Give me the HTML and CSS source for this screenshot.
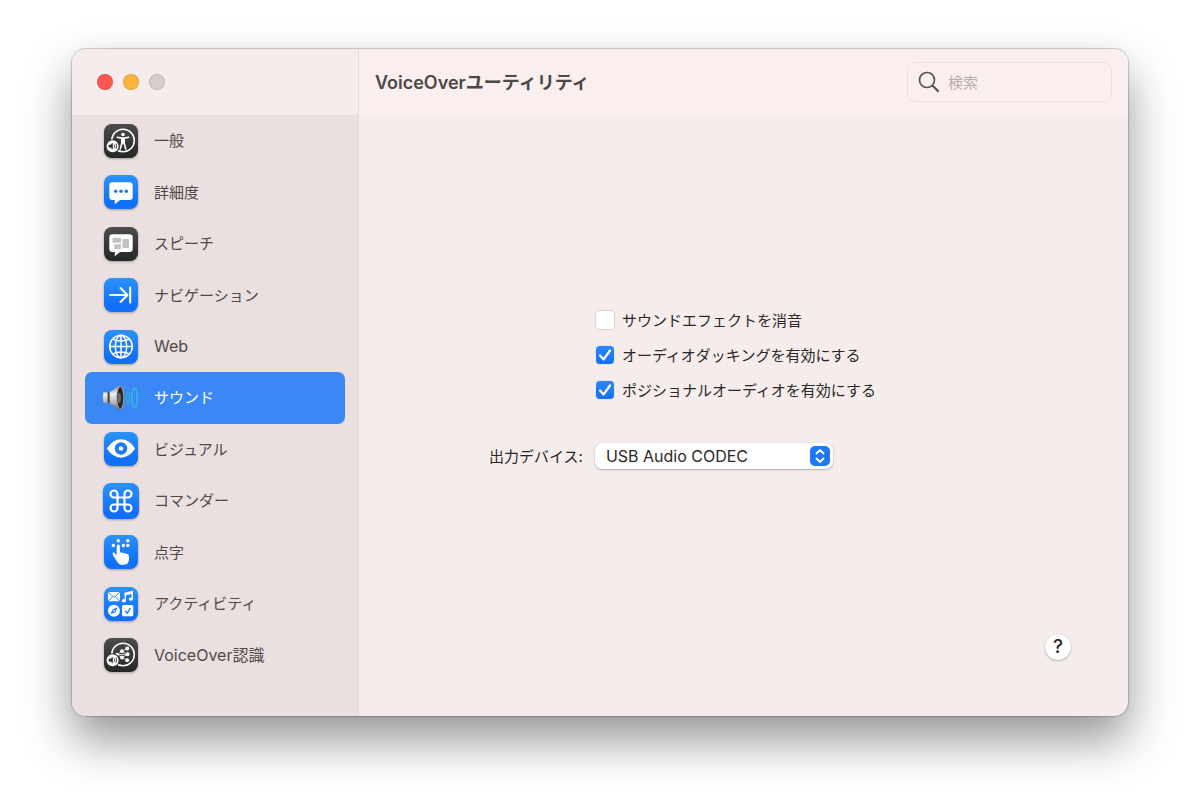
FILE: index.html
```html
<!DOCTYPE html>
<html lang="ja">

<head>
    <meta charset="UTF-8">
    <meta name="viewport" content="width=device-width, initial-scale=1.0">
    <title>VoiceOverユーティリティ</title>
    <link rel="stylesheet" href="styles.css">
</head>

<body>
    <!-- Shared gradients for the sidebar icons -->
    <svg class="defs" width="0" height="0" aria-hidden="true">
        <defs>
            <linearGradient id="blue" x1="0" y1="0" x2="0" y2="1">
                <stop offset="0" stop-color="#2b92fb" />
                <stop offset="0.8" stop-color="#1070fa" />
            </linearGradient>
            <linearGradient id="dark" x1="0" y1="0" x2="0" y2="1">
                <stop offset="0" stop-color="#4b4d4d" />
                <stop offset="1" stop-color="#252727" />
            </linearGradient>
            <linearGradient id="metal" x1="0" y1="0" x2="0" y2="1">
                <stop offset="0" stop-color="#8d8d8d" />
                <stop offset="0.35" stop-color="#f0f0f0" />
                <stop offset="0.7" stop-color="#b5b5b5" />
                <stop offset="1" stop-color="#5e5e5e" />
            </linearGradient>
        </defs>
    </svg>

    <div class="window">
        <aside class="sidebar">
            <div class="window-controls">
                <button class="control close" type="button" aria-label="閉じる"></button>
                <button class="control minimize" type="button" aria-label="しまう"></button>
                <button class="control zoom" type="button" aria-label="拡大" disabled></button>
            </div>
            <nav class="categories">
                <a class="category" href="#general">
                    <svg class="category-icon" viewBox="0 0 38 38">
                        <rect x="2" y="2" width="34" height="34" rx="8" fill="url(#dark)" />
                        <circle cx="21" cy="18.5" r="11.3" fill="none" stroke="#fff" stroke-width="1.5" />
                        <circle cx="21" cy="12.5" r="1.8" fill="#fff" />
                        <path d="M15.3 15.2l4.2.9h3l4.2-.9M21 16.5v5M19.8 16.5v5l-1.6 5.5M22.2 16.5v5l1.6 5.5" fill="none" stroke="#fff" stroke-width="1.6" stroke-linecap="round" />
                        <circle cx="10.6" cy="24.2" r="7" fill="#323434" />
                        <circle cx="10.6" cy="24.2" r="6" fill="#fff" />
                        <path d="M6.6 22.8h1.8l2.4-2v6.8l-2.4-2H6.6z" fill="#333" />
                        <path d="M12.2 22.6q1 1.6 0 3.2M13.8 21.5q1.8 2.7 0 5.4" fill="none" stroke="#333" stroke-width="0.9" />
                    </svg>
                    <span class="category-name">一般</span>
                </a>
                <a class="category" href="#verbosity">
                    <svg class="category-icon" viewBox="0 0 38 38">
                        <rect x="2" y="2" width="34" height="34" rx="8" fill="url(#blue)" />
                        <path d="M10.5 9.3h17a3.2 3.2 0 0 1 3.2 3.2v11.3a3.2 3.2 0 0 1-3.2 3.2H18l-5.2 4.3V27h-2.3a3.2 3.2 0 0 1-3.2-3.2V12.5a3.2 3.2 0 0 1 3.2-3.2z" fill="#fff" />
                        <g fill="#187bfa">
                            <circle cx="13.7" cy="18.2" r="1.7" />
                            <circle cx="19" cy="18.2" r="1.7" />
                            <circle cx="24.3" cy="18.2" r="1.7" />
                        </g>
                    </svg>
                    <span class="category-name">詳細度</span>
                </a>
                <a class="category" href="#speech">
                    <svg class="category-icon" viewBox="0 0 38 38">
                        <rect x="2" y="2" width="34" height="34" rx="8" fill="url(#dark)" />
                        <path d="M10.5 9.3h17a3.2 3.2 0 0 1 3.2 3.2v11.3a3.2 3.2 0 0 1-3.2 3.2H18l-5.2 4.3V27h-2.3a3.2 3.2 0 0 1-3.2-3.2V12.5a3.2 3.2 0 0 1 3.2-3.2z" fill="#fff" />
                        <g fill="#c2c2c2">
                            <rect x="10.5" y="12.8" width="8.5" height="5" rx="0.8" />
                            <rect x="12.2" y="19.3" width="6.8" height="4.7" rx="0.8" />
                            <rect x="20.5" y="14" width="6.5" height="9" rx="0.8" />
                        </g>
                    </svg>
                    <span class="category-name">スピーチ</span>
                </a>
                <a class="category" href="#navigation">
                    <svg class="category-icon" viewBox="0 0 38 38">
                        <rect x="2" y="2" width="34" height="34" rx="8" fill="url(#blue)" />
                        <path d="M8 19h17.5M18.5 12l7 7-7 7M28.2 11.5v15" fill="none" stroke="#fff" stroke-width="2" stroke-linecap="round" stroke-linejoin="round" />
                    </svg>
                    <span class="category-name">ナビゲーション</span>
                </a>
                <a class="category" href="#web">
                    <svg class="category-icon" viewBox="0 0 38 38">
                        <rect x="2" y="2" width="34" height="34" rx="8" fill="url(#blue)" />
                        <g fill="none" stroke="#fff" stroke-width="1.5">
                            <circle cx="19" cy="18.5" r="11.3" />
                            <ellipse cx="19" cy="18.5" rx="5.7" ry="11.3" />
                            <path d="M7.7 18.5h22.6M19 7.2v22.6M10.5 11q8.5 4 17 0M10.5 26q8.5-4 17 0" />
                        </g>
                    </svg>
                    <span class="category-name latin">Web</span>
                </a>
                <a class="category selected" href="#sound" aria-current="page">
                    <svg class="category-icon no-shadow" viewBox="0 0 38 38">
                        <path d="M1.3 13.5q-.8 5 0 9.500 2.200 1.300 5.200.8 5 2.200 9.500 6.700 3.500 1.500 5-2 2-9.800 0-19.500-1.500-3.500-5-2-4.500 4.700-9.500 6.800-3-.8-5.200-.3z" fill="url(#metal)" />
                        <path d="M5.500 13.500l2.200-.4v11.300l-2.200-.6z" fill="#4a4a4a" />
                        <ellipse cx="18.300" cy="18.700" rx="3.500" ry="11.200" fill="#292929" stroke="#aaa" stroke-width="0.8" />
                        <ellipse cx="17.300" cy="19" rx="1.600" ry="5" fill="#6c6c6c" />
                        <ellipse cx="26" cy="18.7" rx="1.6" ry="5.6" fill="none" stroke="#35a8e0" stroke-width="1.5" />
                        <ellipse cx="32.5" cy="18.7" rx="2.7" ry="9.7" fill="none" stroke="#35b2e2" stroke-width="1.7" />
                    </svg>
                    <span class="category-name">サウンド</span>
                </a>
                <a class="category" href="#visual">
                    <svg class="category-icon" viewBox="0 0 38 38">
                        <rect x="2" y="2" width="34" height="34" rx="8" fill="url(#blue)" />
                        <path d="M4.8 18.5Q11 9.3 19 9.3t14.2 9.2Q27 27.7 19 27.7T4.8 18.5z" fill="#fff" />
                        <circle cx="19" cy="18.5" r="6.2" fill="#187afa" />
                        <circle cx="19" cy="18.5" r="2.3" fill="#fff" />
                    </svg>
                    <span class="category-name">ビジュアル</span>
                </a>
                <a class="category" href="#commanders">
                    <svg class="category-icon" viewBox="0 0 38 38">
                        <rect x="1" y="1" width="36" height="36" rx="8" fill="url(#blue)" />
                        <path d="M15.5 12a3.5 3.5 0 1 0-3.5 3.5h14a3.5 3.5 0 1 0-3.5-3.5v14a3.5 3.5 0 1 0 3.5-3.5H12a3.5 3.5 0 1 0 3.5 3.5z" fill="none" stroke="#fff" stroke-width="2.2" />
                    </svg>
                    <span class="category-name">コマンダー</span>
                </a>
                <a class="category" href="#braille">
                    <svg class="category-icon" viewBox="0 0 38 38">
                        <rect x="2" y="2" width="34" height="34" rx="8" fill="url(#blue)" />
                        <g fill="#fff">
                            <circle cx="16.3" cy="7.8" r="1.7" />
                            <circle cx="25.8" cy="7.8" r="1.7" />
                            <circle cx="11.3" cy="12.5" r="1.7" />
                            <circle cx="21.3" cy="12.5" r="1.7" />
                            <circle cx="25.8" cy="12.5" r="1.7" />
                            <path d="M14.7 13.2a1.6 1.6 0 0 1 3.2 0v6.3q1.2-.8 2.4.4 1.4-.7 2.3.5 1.5-.5 2.2.7 2.2 0 2.2 2.4v2.5q0 5.8-6.2 6-4 0-5.8-3.5l-3.6-5.6q-1.6-2.8-.2-3.3 1.2-.3 2.3 1.4l1.2 1.2z" />
                        </g>
                    </svg>
                    <span class="category-name">点字</span>
                </a>
                <a class="category" href="#activities">
                    <svg class="category-icon" viewBox="0 0 38 38">
                        <rect x="2" y="2" width="34" height="34" rx="8" fill="url(#blue)" />
                        <rect x="6" y="7" width="12" height="9.3" rx="1.5" fill="#fff" />
                        <path d="M6.5 7.5l5.5 4.8 5.5-4.8M6.5 16l4-4.5M17.5 16l-4-4.500" fill="none" stroke="#1c80fa" stroke-width="0.9" />
                        <path d="M23.3 15.5V8.3l7-1.6v7.3" fill="none" stroke="#fff" stroke-width="1.4" />
                        <path d="M22.7 8.3l8.2-1.9v2.3l-8.2 1.9z" fill="#fff" />
                        <ellipse cx="21.9" cy="15.7" rx="2.1" ry="1.6" fill="#fff" />
                        <ellipse cx="28.9" cy="14.1" rx="2.1" ry="1.6" fill="#fff" />
                        <circle cx="12" cy="25.7" r="6" fill="#fff" />
                        <path d="M15.5 22.2l-2 4.8-5 2.2 2-4.8z" fill="#1674fa" />
                        <circle cx="12" cy="25.7" r="0.9" fill="#fff" />
                        <rect x="20" y="20" width="11.3" height="11.3" rx="1.5" fill="#fff" />
                        <path d="M23.2 26l2 2.2 3.3-5.2" fill="none" stroke="#1674fa" stroke-width="1.3" />
                    </svg>
                    <span class="category-name">アクティビティ</span>
                </a>
                <a class="category" href="#recognition">
                    <svg class="category-icon" viewBox="0 0 38 38">
                        <rect x="2" y="2" width="34" height="34" rx="8" fill="url(#dark)" />
                        <circle cx="21" cy="18.5" r="11.3" fill="none" stroke="#fff" stroke-width="1.5" />
                        <path d="M15 18.5l5-3.3 5-2.5M15 18.5l5 3 5 2.5M20 15.2l5.3 3.3-5.3 3M15 18.5h10" fill="none" stroke="#fff" stroke-width="0.7" />
                        <g fill="#fff">
                            <circle cx="15" cy="18.5" r="1.7" />
                            <circle cx="20" cy="15.2" r="1.9" />
                            <circle cx="20" cy="21.5" r="1.9" />
                            <circle cx="25.2" cy="12.5" r="2" />
                            <circle cx="25.5" cy="18.3" r="2" />
                            <circle cx="25.2" cy="24.2" r="2" />
                        </g>
                        <circle cx="10.6" cy="24.2" r="7" fill="#323434" />
                        <circle cx="10.6" cy="24.2" r="6" fill="#fff" />
                        <path d="M6.6 22.8h1.8l2.4-2v6.8l-2.4-2H6.6z" fill="#333" />
                        <path d="M12.2 22.6q1 1.6 0 3.2M13.8 21.5q1.8 2.7 0 5.4" fill="none" stroke="#333" stroke-width="0.9" />
                    </svg>
                    <span class="category-name latin">VoiceOver認識</span>
                </a>
            </nav>
        </aside>

        <main class="main">
            <header class="toolbar">
                <h1 class="title">VoiceOverユーティリティ</h1>
                <label class="search">
                    <svg class="search-icon" viewBox="0 0 22 22" aria-hidden="true">
                        <circle cx="9" cy="9" r="7.5" fill="none" stroke="#5a5352" stroke-width="1.7" />
                        <path d="M14.5 14.5l5.5 5.5" stroke="#5a5352" stroke-width="2.2" stroke-linecap="round" />
                    </svg>
                    <input class="search-input" type="search" placeholder="検索" aria-label="検索">
                </label>
            </header>

            <form class="settings">
                <div class="options">
                    <label class="option"><input class="checkbox" type="checkbox">サウンドエフェクトを消音</label>
                    <label class="option"><input class="checkbox" type="checkbox" checked>オーディオダッキングを有効にする</label>
                    <label class="option"><input class="checkbox" type="checkbox" checked>ポジショナルオーディオを有効にする</label>
                </div>
                <label class="device-label" for="device">出力デバイス:</label>
                <select class="device" id="device">
                    <option>USB Audio CODEC</option>
                </select>
            </form>

            <footer class="footer">
                <button class="help" type="button" aria-label="ヘルプ">?</button>
            </footer>
        </main>
    </div>
</body>

</html>
```
FILE: styles.css
```css
* {
    box-sizing: border-box;
    margin: 0;
    padding: 0;
}

body {
    display: flex;
    min-height: 100vh;
    padding: 49px 72px 95px;
    background-color: #fff;
    font-family: Inter, "Noto Sans CJK JP", sans-serif;
    font-size: 15px;
    color: #2b2727;
}

input,
select,
button {
    font: inherit;
    color: inherit;
}

.defs {
    position: absolute;
}

.window {
    flex: 1;
    display: flex;
    border-radius: 14px;
    overflow: hidden;
    background-color: #f5edeb;
    box-shadow: 0 0 1px 1px rgba(0, 0, 0, 0.2), 0 24px 48px rgba(0, 0, 0, 0.42);
}

/* Sidebar */

.sidebar {
    flex: 0 0 287px;
    display: flex;
    flex-direction: column;
    background-color: #e9e0df;
    border-right: 1px solid #e3dad9;
}

.window-controls {
    display: flex;
    align-items: center;
    gap: 10px;
    height: 66px;
    padding-left: 25px;
    background-color: #f6eceb;
}

.control {
    width: 16px;
    height: 16px;
    border: 1px solid rgba(0, 0, 0, 0.1);
    border-radius: 50%;
}

.close {
    background-color: #fe5850;
}

.minimize {
    background-color: #fdb43c;
}

.zoom {
    background-color: #d6cdcc;
}

.categories {
    flex: 1;
    display: flex;
    flex-direction: column;
    padding: 0 13px 35px;
}

.category {
    flex: 1;
    display: flex;
    align-items: center;
    gap: 14px;
    padding-left: 17px;
    border-radius: 7px;
    color: #4f4948;
    text-decoration: none;
}

.selected {
    background-color: #3988f5;
    color: #fff;
}

.category-icon {
    width: 38px;
    height: 38px;
    filter: drop-shadow(0 1px 1px rgba(0, 0, 0, 0.3));
}

.no-shadow {
    filter: none;
}

.category-name {
    padding-bottom: 2px;
}

.latin {
    font-size: 16px;
}

/* Main pane */

.main {
    flex: 1;
    display: flex;
    flex-direction: column;
}

.toolbar {
    display: flex;
    align-items: center;
    justify-content: space-between;
    height: 66px;
    padding: 0 16px;
    background-color: #faefee;
}

.title {
    padding-bottom: 2px;
    font-size: 18px;
    font-weight: 600;
    color: #4d4746;
}

.search {
    display: flex;
    align-items: center;
    gap: 8px;
    width: 205px;
    height: 40px;
    padding: 0 10px;
    border: 1px solid #ece1e0;
    border-radius: 8px;
}

.search-icon {
    flex: none;
    width: 22px;
    height: 22px;
}

.search-input {
    width: 100%;
    border: none;
    outline: none;
    background: none;
}

.search-input::placeholder {
    color: #b8adac;
}

.settings {
    flex: 1;
    display: grid;
    grid-template-columns: auto 1fr;
    align-content: center;
    align-items: center;
    gap: 41px 12px;
    padding: 27px 16px 0 130px;
}

.options {
    grid-column: 2;
    display: flex;
    flex-direction: column;
    gap: 11px;
}

.option {
    display: flex;
    align-items: center;
    gap: 8px;
    height: 24px;
    padding-left: 1px;
}

.checkbox {
    appearance: none;
    width: 18px;
    height: 18px;
    border-radius: 4px;
    background-color: #fff;
    box-shadow: 0 0 1px 1px rgba(0, 0, 0, 0.12);
}

.checkbox:checked {
    background: url("data:image/svg+xml,%3Csvg xmlns='http://www.w3.org/2000/svg' viewBox='0 0 18 18'%3E%3Cpath d='M4 9.5l3.5 4L14 4.5' fill='none' stroke='white' stroke-width='2.2' stroke-linecap='round' stroke-linejoin='round'/%3E%3C/svg%3E"), linear-gradient(#2c87fb, #1370f9);
    box-shadow: 0 0 1px rgba(0, 80, 200, 0.5);
}

.device {
    appearance: none;
    width: 238px;
    height: 26px;
    padding: 0 36px 0 11px;
    border: none;
    border-radius: 7px;
    background: #fff url("data:image/svg+xml,%3Csvg xmlns='http://www.w3.org/2000/svg' viewBox='0 0 20 20'%3E%3Crect width='20' height='20' rx='5' fill='%231d79fa'/%3E%3Cpath d='M6.5 7.5L10 4l3.5 3.5M6.5 12.5L10 16l3.5-3.5' fill='none' stroke='white' stroke-width='1.8' stroke-linecap='round' stroke-linejoin='round'/%3E%3C/svg%3E") no-repeat right 3px center / 20px 20px;
    box-shadow: 0 1px 2px rgba(0, 0, 0, 0.25), 0 0 1px rgba(0, 0, 0, 0.2);
    font-size: 16px;
}

.footer {
    display: flex;
    justify-content: flex-end;
    padding: 0 57px 56px;
}

.help {
    width: 26px;
    height: 26px;
    border: none;
    border-radius: 50%;
    background-color: #fff;
    box-shadow: 0 1px 2px rgba(0, 0, 0, 0.25), 0 0 1px rgba(0, 0, 0, 0.2);
    font-size: 19px;
    font-weight: 500;
    line-height: 26px;
}
```
